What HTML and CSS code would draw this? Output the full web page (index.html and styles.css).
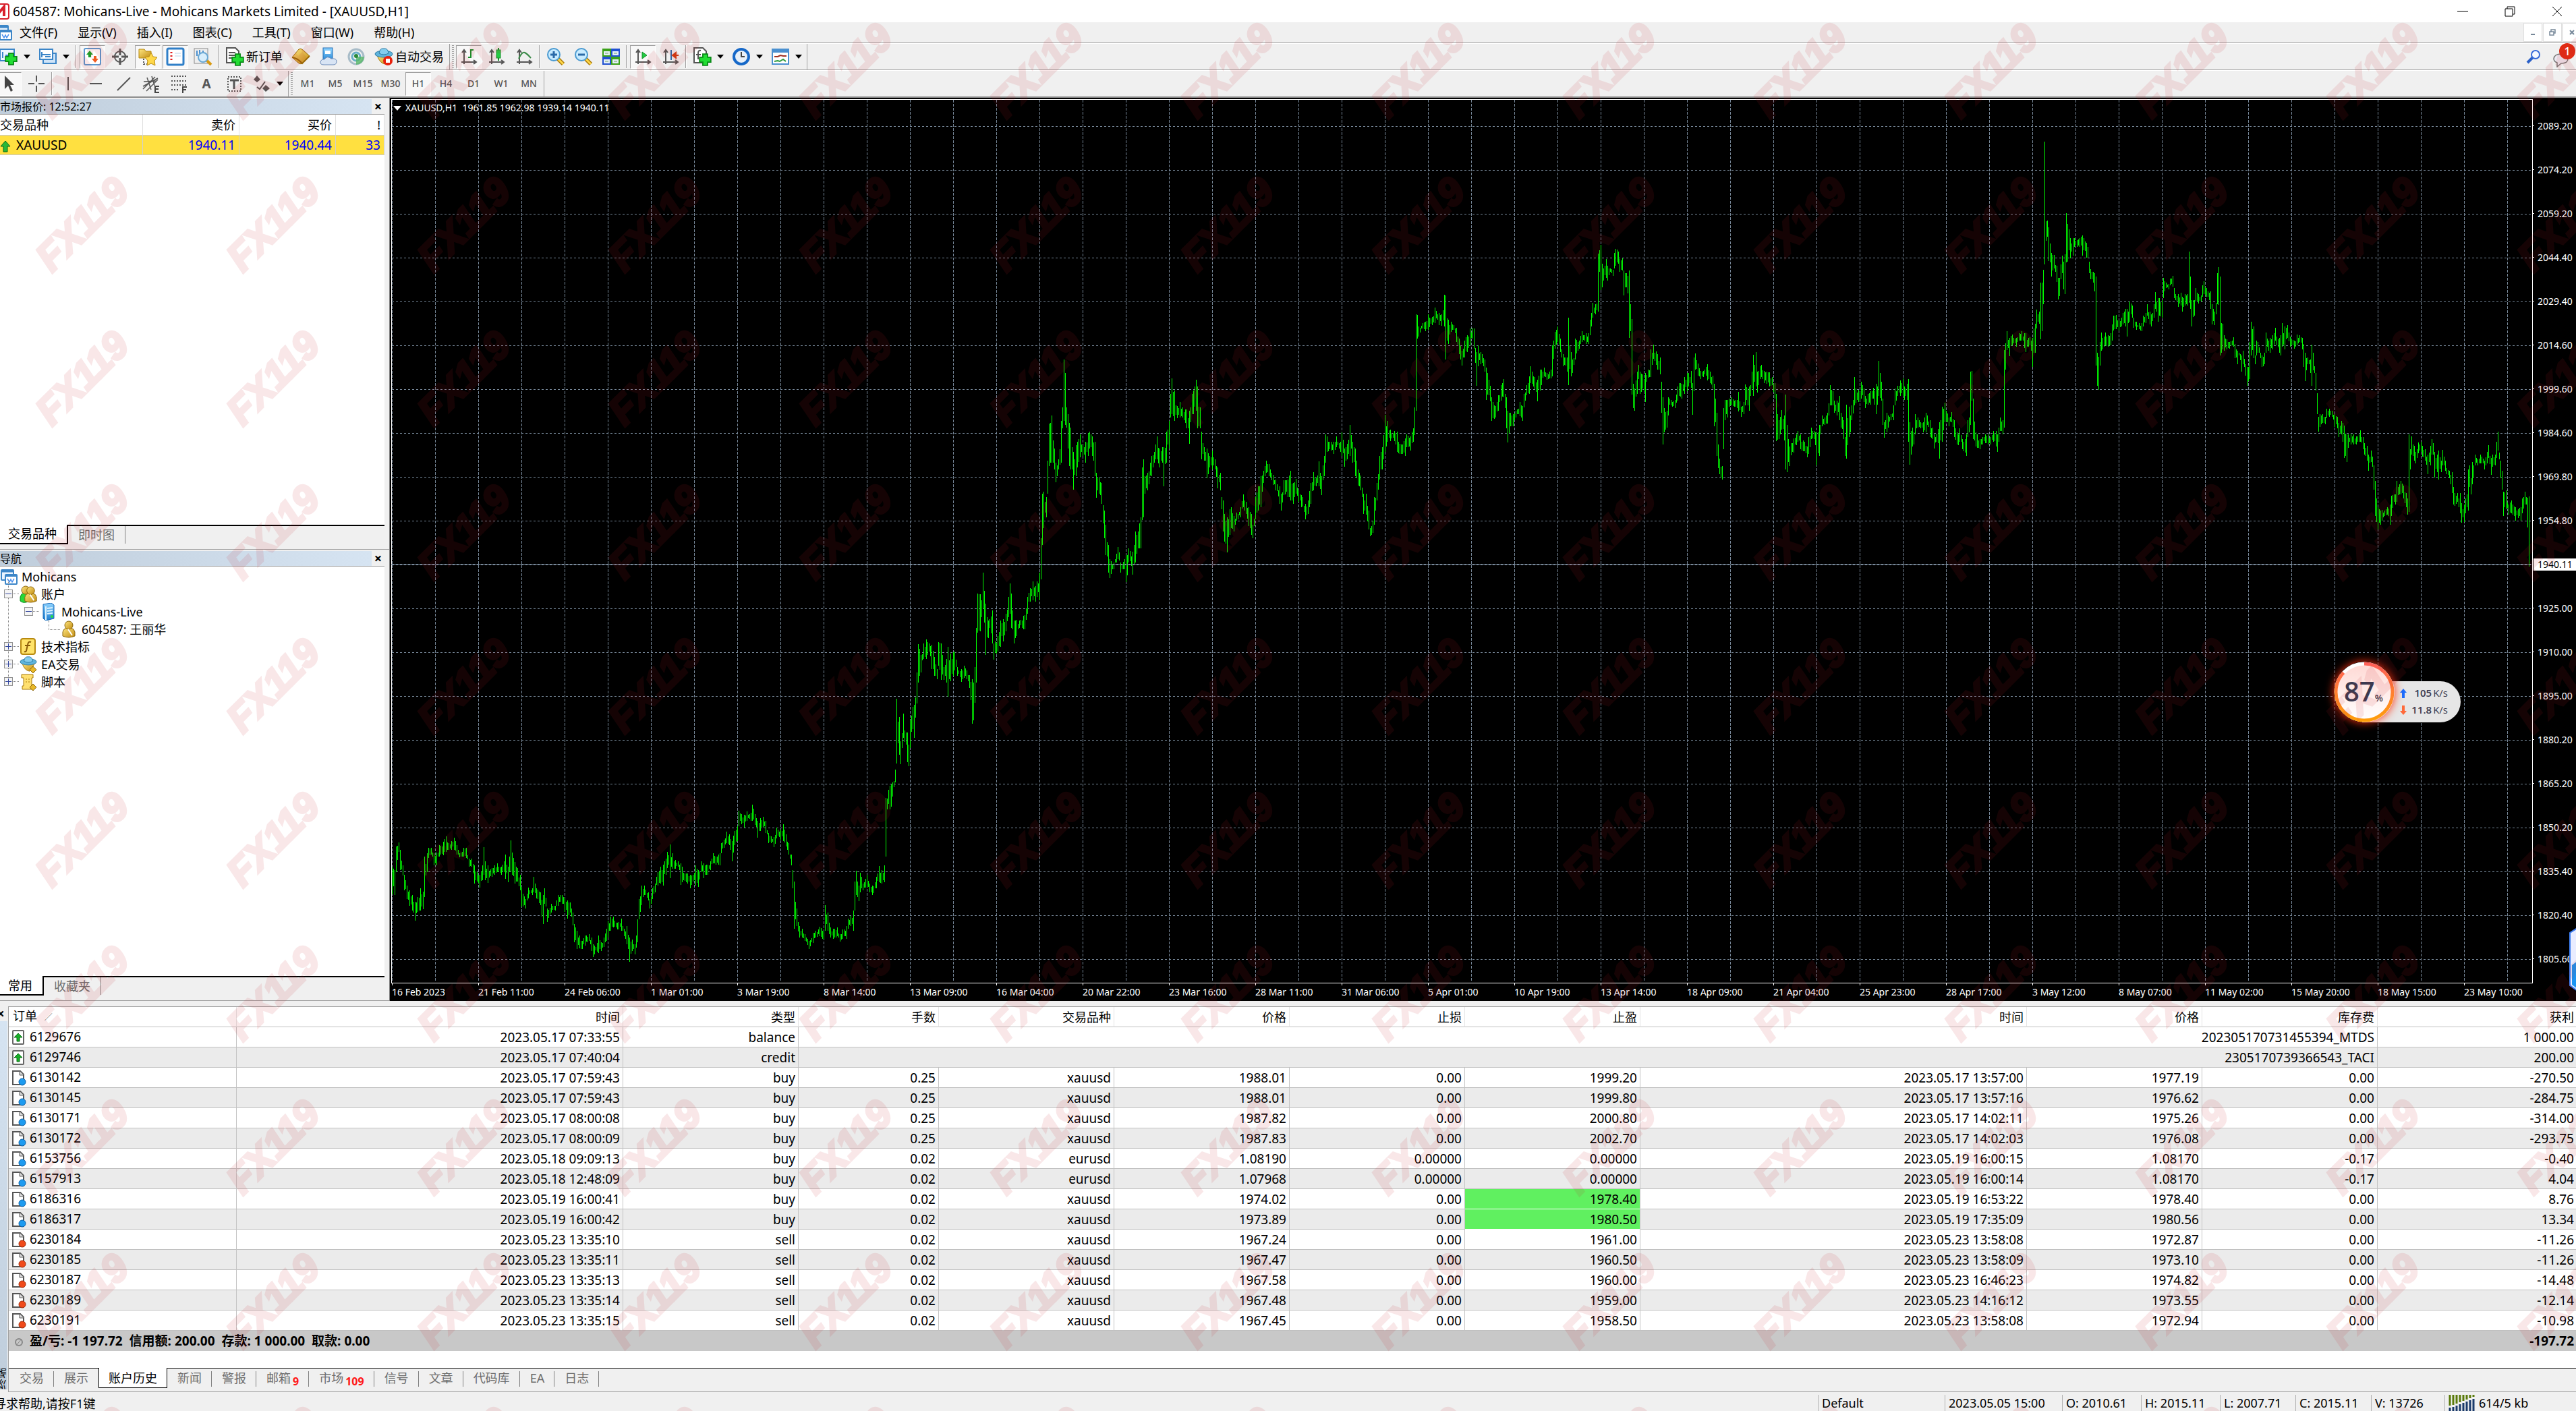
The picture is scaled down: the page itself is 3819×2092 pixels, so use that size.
FILE: index.html
```html
<!DOCTYPE html>
<html lang="zh-CN">
<head>
<meta charset="utf-8">
<title>604587: Mohicans-Live - Mohicans Markets Limited - [XAUUSD,H1]</title>
<link rel="stylesheet" href="styles.css">
</head>
<body>
<svg class="defs" aria-hidden="true">
  <defs>
    <linearGradient id="gold" x1="0" y1="0" x2="1" y2="1"><stop offset="0" stop-color="#ffe680"/><stop offset="1" stop-color="#c08a10"/></linearGradient>
    <linearGradient id="sky" x1="0" y1="0" x2="0" y2="1"><stop offset="0" stop-color="#8fd4ff"/><stop offset="1" stop-color="#1f7fd0"/></linearGradient>
    <linearGradient id="ring" x1="0" y1="0" x2="1" y2="0"><stop offset="0" stop-color="#ff9d0a"/><stop offset="1" stop-color="#ff6058"/></linearGradient>
    <linearGradient id="face" x1="0" y1="0" x2="0" y2="1"><stop offset="0" stop-color="#ffd9d4"/><stop offset="1" stop-color="#ffffff"/></linearGradient>
    <symbol id="doc" viewBox="0 0 22 24"><path d="M2 2h11l5 5v15H2z" fill="#fff" stroke="#555" stroke-width="2"/><path d="M12 2v6h6" fill="#ddd" stroke="#555"/></symbol>
    <symbol id="doc-buy" viewBox="0 0 22 24"><use href="#doc"/><circle cx="16" cy="18" r="5" fill="#1d9bf0" stroke="#0a5fa8"/></symbol>
    <symbol id="doc-sell" viewBox="0 0 22 24"><use href="#doc"/><circle cx="16" cy="18" r="5" fill="#f04a1a" stroke="#a02a08"/></symbol>
    <symbol id="doc-in" viewBox="0 0 22 24"><rect x="2" y="2" width="16" height="20" rx="1" fill="#fff" stroke="#666" stroke-width="2"/><path d="M10 6l6 6h-4v6H8v-6H4z" fill="#18b028" stroke="#0a6a14"/></symbol>
    <symbol id="plus" viewBox="0 0 16 16"><path d="M5 1h6v4h4v6h-4v4H5v-4H1V5h4z" fill="#22dd33" stroke="#0a8a18" stroke-width="1.5"/></symbol>
    <symbol id="windows" viewBox="0 0 26 26"><rect x="2" y="3" width="18" height="15" rx="1" fill="#eaf4ff" stroke="#3c86c8" stroke-width="2"/><path d="M2 5h18" stroke="#3c86c8" stroke-width="3"/><rect x="8" y="10" width="17" height="14" rx="1" fill="#fff" stroke="#3c86c8" stroke-width="2"/><path d="M8 12h17" stroke="#3c86c8" stroke-width="2"/><path d="M11 16l3 5 2-4 2 4 3-5" fill="none" stroke="#4a90ee" stroke-width="1.5"/></symbol>
    <symbol id="hat" viewBox="0 0 28 28"><path d="M4 12q4 12 12 13l8-12z" fill="url(#gold)" stroke="#a87808"/><ellipse cx="14" cy="10" rx="13" ry="5" fill="#5fb4dc" stroke="#2b7aa4"/><path d="M7 9q1-8 7-7 6-1 7 7-7 4-14 0z" fill="#84cdee" stroke="#2b7aa4"/></symbol>
    <symbol id="man" viewBox="0 0 26 26"><path d="M4 23V17q1-5 6-6h6q5 1 6 6v6q-9 4-18 0z" fill="url(#gold)" stroke="#8a6408"/><circle cx="13" cy="7" r="6" fill="url(#gold)" stroke="#8a6408"/><path d="M12 13l6 9" stroke="#fff" stroke-width="2"/></symbol>
    <symbol id="axes" viewBox="0 0 26 26"><path d="M6 3v20M2 20h21M3 6l3-4 3 4M20 17l4 3-4 3" fill="none" stroke="#555" stroke-width="2"/></symbol>
    <symbol id="lens" viewBox="0 0 28 28"><path d="M17 17l8 8" stroke="#a87808" stroke-width="6"/><path d="M17 17l8 8" stroke="#ffd84a" stroke-width="3"/><circle cx="11" cy="11" r="9" fill="#c8ebff" stroke="#4a9ad0" stroke-width="2"/></symbol>
    <pattern id="wm" width="283" height="228" patternUnits="userSpaceOnUse">
      <text class="wm-text" transform="translate(77 177) rotate(-45)">FX119</text>
    </pattern>
    <pattern id="hgrid" x="1" y="40" width="6" height="65" patternUnits="userSpaceOnUse"><path d="M0 .5h3" stroke="#778899"/></pattern>
    <pattern id="vgrid" x="65" y="1" width="64" height="6" patternUnits="userSpaceOnUse"><path d="M.5 0v4" stroke="#778899"/></pattern>
  </defs>
</svg>

<header class="titlebar">
  <svg class="app-logo" viewBox="0 0 22 24"><rect x="1" y="1" width="20" height="22" rx="3" fill="#fff" stroke="#d8202c" stroke-width="2"/><path d="M3 19V6l5 6 6-7v14" fill="none" stroke="#d8202c" stroke-width="4"/></svg>
  <h1>604587: Mohicans-Live - Mohicans Markets Limited - [XAUUSD,H1]</h1>
  <div class="window-buttons">
    <button aria-label="最小化"><svg viewBox="0 0 16 16"><path d="M0 8h16" stroke="#000"/></svg></button>
    <button aria-label="还原"><svg viewBox="0 0 16 16"><path d="M1 4h11v11H1zM4 4V1h11v11h-3" fill="none" stroke="#000"/></svg></button>
    <button aria-label="关闭"><svg viewBox="0 0 16 16"><path d="M1 1l14 14M15 1L1 15" stroke="#000"/></svg></button>
  </div>
</header>

<nav class="menubar">
  <svg class="menu-logo"><use href="#windows"/></svg>
  <button>文件(F)</button><button>显示(V)</button><button>插入(I)</button><button>图表(C)</button><button>工具(T)</button><button>窗口(W)</button><button>帮助(H)</button>
  <div class="mdi-buttons">
    <button aria-label="最小化图表"><svg viewBox="0 0 10 10"><path d="M2 8h6" stroke="#778899" stroke-width="2"/></svg></button>
    <button aria-label="还原图表"><svg viewBox="0 0 10 10"><path d="M1 4h6v5H1zM3 4V1h6v5H7" fill="none" stroke="#778899" stroke-width="1.5"/></svg></button>
    <button aria-label="关闭图表"><svg viewBox="0 0 10 10"><path d="M2 2l6 6M8 2L2 8" stroke="#778899" stroke-width="2"/></svg></button>
  </div>
</nav>

<div class="toolbar">
  <div class="group first">
    <button class="drop" aria-label="新图表"><svg class="ic" viewBox="0 0 28 28"><rect x="1" y="3" width="21" height="17" fill="#eef6ff" stroke="#3c86c8" stroke-width="2"/><path d="M5 7v9M9 12h6" stroke="#3c86c8" stroke-width="2"/><use href="#plus" x="8" y="8" width="19" height="19"/></svg><i></i></button>
    <button class="drop" aria-label="配置文件"><svg class="ic" viewBox="0 0 28 28"><rect x="7" y="9" width="19" height="15" fill="#cfe4f8" stroke="#3c86c8" stroke-width="2"/><rect x="2" y="3" width="19" height="15" fill="#fff" stroke="#3c86c8" stroke-width="2"/><path d="M5 7v8M5 11h13M10 14h8" stroke="#3c86c8" stroke-width="2"/></svg><i></i></button>
  </div>
  <div class="group">
    <span class="sep"></span>
    <button class="on" aria-label="市场报价"><svg class="ic" viewBox="0 0 28 28"><rect x="2" y="2" width="24" height="24" rx="2" fill="#fff" stroke="#5a98d0" stroke-width="2"/><path d="M10 5l5 6h-3v4H8v-4H5z" fill="#18a028"/><path d="M18 23l-5-6h3v-4h4v4h3z" fill="#f05a20"/></svg></button>
    <button aria-label="数据窗口"><svg class="ic" viewBox="0 0 28 28"><circle cx="14" cy="14" r="8" fill="none" stroke="#555" stroke-width="2"/><path d="M14 2v10M14 16v10M2 14h10M16 14h10" stroke="#555" stroke-width="3"/></svg></button>
    <button class="on" aria-label="导航"><svg class="ic" viewBox="0 0 28 28"><path d="M1 3h8l2 3h8v10H1z" fill="url(#gold)" stroke="#b88a10"/><path d="M8 17v9M8 25h5" stroke="#555" stroke-width="2" stroke-dasharray="2 2"/><path d="M19 8l3 6 6 1-4 5 1 7-6-3-6 3 1-7-4-5 6-1z" fill="#ffd84a" stroke="#b88a10"/></svg></button>
    <button class="on" aria-label="终端"><svg class="ic" viewBox="0 0 28 28"><rect x="2" y="2" width="24" height="24" rx="2" fill="#fff" stroke="#2f7fc8" stroke-width="3"/><path d="M8 7v14" stroke="#e02020" stroke-width="3" stroke-dasharray="2 3"/><path d="M13 9h9M13 13h9" stroke="#bcd4ea"/></svg></button>
    <button aria-label="策略测试"><svg class="ic" viewBox="0 0 28 28"><rect x="1" y="2" width="20" height="22" fill="#eee" stroke="#888"/><path d="M5 5v8M9 4v8M14 5v6" stroke="#4a90d0" stroke-width="2"/><path d="M19 19l7 7" stroke="#d89a10" stroke-width="4"/><circle cx="14" cy="15" r="7" fill="#d8eefc" stroke="#6aa8d4" stroke-width="2"/></svg></button>
    <span class="sep"></span>
    <button class="label"><svg class="ic" viewBox="0 0 28 28"><path d="M2 1h13l5 5v17H2z" fill="#fff" stroke="#555" stroke-width="2"/><path d="M5 8h10M5 12h10M5 16h6" stroke="#555" stroke-width="2"/><use href="#plus" x="9" y="9" width="19" height="19"/></svg>新订单</button>
    <button aria-label="MetaEditor"><svg class="ic" viewBox="0 0 28 28"><path d="M1 15L11 3q3-2 6 1l10 9-11 11q-3 2-6-1z" fill="url(#gold)" stroke="#9a6808"/><path d="M1 15q8 1 15 9l11-11" fill="none" stroke="#9a6808" stroke-width="2"/></svg></button>
    <button aria-label="云端"><svg class="ic" viewBox="0 0 28 28"><rect x="6" y="1" width="14" height="20" fill="url(#sky)" stroke="#1f6fb8"/><path d="M9 5h8v5H9z" fill="#fff"/><path d="M7 26q-6 0-5-5 2-4 6-3 4-6 10-1 8-1 8 4 0 5-5 5z" fill="#d8e4f4" stroke="#6a8ab8"/></svg></button>
    <button aria-label="信号"><svg class="ic" viewBox="0 0 28 28"><circle cx="14" cy="14" r="11" fill="none" stroke="#a8bcc8" stroke-width="3"/><circle cx="14" cy="14" r="6" fill="none" stroke="#6ab0c8" stroke-width="3"/><path d="M14 14v12q11-1 12-12z" fill="#58b868" opacity=".8"/><circle cx="14" cy="13" r="3" fill="#2a8a3a"/></svg></button>
    <button class="label"><svg class="ic" viewBox="0 0 28 28"><use href="#hat" width="28" height="28"/><circle cx="20" cy="20" r="7" fill="#e8200c"/><rect x="17" y="17" width="6" height="6" fill="#fff"/></svg>自动交易</button>
    <span class="end"></span><span class="grip"></span>
    <button class="on" aria-label="柱状图"><svg class="ic" viewBox="0 0 28 28"><use href="#axes" x="1" y="2" width="26" height="26"/><path d="M17 3v13M17 4h4M13 15h4" stroke="#18902a" stroke-width="2"/></svg></button>
    <button aria-label="蜡烛图"><svg class="ic" viewBox="0 0 28 28"><use href="#axes" x="1" y="2" width="26" height="26"/><path d="M17 1v19" stroke="#18902a" stroke-width="2"/><rect x="14" y="4" width="6" height="12" fill="#22cc44" stroke="#18902a"/></svg></button>
    <button aria-label="折线图"><svg class="ic" viewBox="0 0 28 28"><use href="#axes" x="1" y="2" width="26" height="26"/><path d="M6 17q5-11 9-9t9 8" fill="none" stroke="#3a8a48" stroke-width="2"/></svg></button>
    <span class="sep"></span>
    <button aria-label="放大"><svg class="ic" viewBox="0 0 28 28"><use href="#lens" width="28" height="28"/><path d="M6 11h10M11 6v10" stroke="#2a6aa8" stroke-width="3"/></svg></button>
    <button aria-label="缩小"><svg class="ic" viewBox="0 0 28 28"><use href="#lens" width="28" height="28"/><path d="M6 11h10" stroke="#2a6aa8" stroke-width="3"/></svg></button>
    <button aria-label="平铺"><svg class="ic" viewBox="0 0 28 28"><path d="M1 2h13v12H1zM14 14h13v12H14z" fill="#3aa018"/><path d="M14 2h13v12H14zM1 14h13v12H1z" fill="#2050d0"/><path d="M3 6h9v6H3zM16 6h9v6h-9zM3 18h9v6H3zM16 18h9v6h-9z" fill="#e4eef8"/><path d="M5 9h5M18 9h5M5 21h5M18 21h5" stroke="#6aa060"/></svg></button>
    <span class="sep"></span>
    <button class="on" aria-label="自动滚动"><svg class="ic" viewBox="0 0 28 28"><use href="#axes" x="1" y="2" width="26" height="26"/><path d="M13 7l7 5-7 5z" fill="#22cc44" stroke="#18902a"/></svg></button>
    <button aria-label="图表平移"><svg class="ic" viewBox="0 0 28 28"><use href="#axes" x="1" y="2" width="26" height="26"/><path d="M15 4v15" stroke="#2a6aa8" stroke-width="2"/><path d="M26 12h-6M22 8l-5 4 5 4z" stroke="#d03a10" stroke-width="2" fill="#d03a10"/></svg></button>
    <span class="sep"></span>
    <button class="drop" aria-label="指标"><svg class="ic" viewBox="0 0 28 28"><path d="M2 1h13l5 5v17H2z" fill="#fff" stroke="#555" stroke-width="2"/><path d="M12 5q-4-1-4 4v9M5 11h7" stroke="#555" stroke-width="2" fill="none"/><use href="#plus" x="9" y="9" width="19" height="19"/></svg><i></i></button>
    <button class="drop" aria-label="周期"><svg class="ic" viewBox="0 0 28 28"><circle cx="14" cy="14" r="11" fill="#e8f0f8" stroke="#1668c8" stroke-width="4"/><path d="M14 7v7h5" fill="none" stroke="#444" stroke-width="2"/></svg><i></i></button>
    <button class="drop" aria-label="模板"><svg class="ic" viewBox="0 0 28 28"><rect x="2" y="3" width="24" height="22" fill="#fff" stroke="#4a90d0" stroke-width="2"/><path d="M2 6h24" stroke="#4a90d0" stroke-width="4"/><path d="M5 14h5l4-2 4 1h5" fill="none" stroke="#a03020" stroke-width="2"/><path d="M5 21l5-1 3 1 5-3 4 3" fill="none" stroke="#2a9a3a" stroke-width="2"/></svg><i></i></button>
    <span class="end"></span>
  </div>
  <div class="toolbar-right">
    <button aria-label="搜索"><svg viewBox="0 0 22 22"><path d="M2 20l8-8" stroke="#2a60c8" stroke-width="4"/><circle cx="14" cy="8" r="6" fill="#f4f8ff" stroke="#3468d8" stroke-width="2"/></svg></button>
    <button class="chat" aria-label="消息"><svg viewBox="0 0 26 22"><path d="M12 2q10 0 10 7t-10 7l-6 5v-6q-5-2-5-6 1-7 11-7z" fill="#eceaf2" stroke="#777" stroke-width="1.5"/></svg><b>1</b></button>
  </div>
</div>

<div class="toolbar lines">
  <div class="group tools">
    <button class="on" aria-label="光标"><svg class="ic" viewBox="0 0 28 28"><path d="M8 2v20l5-5 4 9 3-2-4-8h6z" fill="#444"/></svg></button>
    <button aria-label="十字线"><svg class="ic" viewBox="0 0 28 28"><path d="M14 2v9M14 17v9M2 14h9M17 14h9" stroke="#555" stroke-width="2"/></svg></button>
    <span class="sep"></span>
    <button aria-label="垂直线"><svg class="ic" viewBox="0 0 28 28"><path d="M14 4v20" stroke="#555" stroke-width="2"/></svg></button>
    <button aria-label="水平线"><svg class="ic" viewBox="0 0 28 28"><path d="M5 14h18" stroke="#555" stroke-width="2"/></svg></button>
    <button aria-label="趋势线"><svg class="ic" viewBox="0 0 28 28"><path d="M5 24L24 5" stroke="#555" stroke-width="2"/></svg></button>
    <button aria-label="通道"><svg class="ic" viewBox="0 0 28 28"><path d="M2 22L20 4M7 25L24 8M2 18l22-12M3 11l20-1M8 5l6 18M15 3l4 14" stroke="#555" stroke-width="1.5"/><path d="M26 18h-6v9h6M20 22h5" fill="none" stroke="#444" stroke-width="2"/></svg></button>
    <button aria-label="斐波纳契"><svg class="ic" viewBox="0 0 28 28"><path d="M3 3h22M3 10h22M3 16h22M3 23h12" stroke="#555" stroke-width="2" stroke-dasharray="2 2"/><path d="M26 19h-6v9M20 23h5" fill="none" stroke="#444" stroke-width="2"/></svg></button>
    <button class="letter">A</button>
    <button aria-label="文本标签"><svg class="ic" viewBox="0 0 28 28"><rect x="5" y="4" width="19" height="21" fill="none" stroke="#555" stroke-width="2" stroke-dasharray="2 2"/><path d="M8 9h13M14 9v13" stroke="#555" stroke-width="3"/></svg></button>
    <button class="drop" aria-label="箭头"><svg class="ic" viewBox="0 0 28 28"><path d="M7 2l5 6-5 4-5-4zM20 16l6 5-6 5-5-5z" fill="#555"/><path d="M7 19l4 3 8-11" fill="none" stroke="#555" stroke-width="2"/></svg><i></i></button>
    <span class="end"></span><span class="grip"></span>
    <button>M1</button><button>M5</button><button>M15</button><button>M30</button><button class="on">H1</button><button>H4</button><button>D1</button><button>W1</button><button>MN</button>
    <span class="end"></span>
  </div>
</div>

<main class="workspace">
  <aside class="side">
    <section class="panel">
      <div class="panel-title"><h2>市场报价: 12:52:27</h2><button aria-label="关闭市场报价">×</button></div>
      <div class="quotes-list">
      <table class="quotes">
        <colgroup><col class="q-name"><col class="q-bid"><col class="q-bid"><col class="q-spread"></colgroup>
        <thead><tr><th>交易品种</th><th>卖价</th><th>买价</th><th>!</th></tr></thead>
        <tbody><tr><td><svg viewBox="0 0 16 18"><path d="M8 1l7 8h-4v8H5V9H1z" fill="#28b838" stroke="#0a6a14"/></svg>XAUUSD</td><td>1940.11</td><td>1940.44</td><td>33</td></tr></tbody>
      </table>
      </div>
      <div class="panel-tabs"><button class="active">交易品种</button><button>即时图</button></div>
    </section>
    <section class="panel">
      <div class="panel-title"><h2>导航</h2><button aria-label="关闭导航">×</button></div>
      <ul class="tree">
        <li><svg class="node"><use href="#windows"/></svg>Mohicans</li>
        <li class="l1"><span class="box minus"></span><svg class="node" viewBox="0 0 26 26"><path d="M1 23v-6q1-5 6-6h6v13q-8 3-12-1z" fill="#28d838" stroke="#0a8a18"/><circle cx="9" cy="7" r="6" fill="url(#gold)" stroke="#8a6408"/><use href="#man" x="4" y="1" width="25" height="25"/></svg>账户</li>
        <li class="l2"><span class="box minus"></span><svg class="node" viewBox="0 0 26 26"><path d="M5 2l12-2 4 3v20l-12 3-4-3z" fill="url(#sky)" stroke="#1668b8"/><path d="M9 5v20M11 8l8-1M11 12l8-1M11 16l8-1" stroke="#e0f4ff" stroke-width="2"/><circle cx="18" cy="20" r="2" fill="#28e040"/></svg>Mohicans-Live</li>
        <li class="l3"><svg class="node"><use href="#man"/></svg>604587: 王丽华</li>
        <li class="l1"><span class="box plus"></span><svg class="node" viewBox="0 0 26 26"><rect x="2" y="1" width="21" height="23" rx="3" fill="#ffe36a" stroke="#b88a10" stroke-width="2"/><path d="M17 6q-4-2-5 4l-2 9q-1 2-3 1M8 11h8" fill="none" stroke="#8a5a08" stroke-width="2"/></svg>技术指标</li>
        <li class="l1"><span class="box plus"></span><svg class="node" viewBox="0 0 26 26"><use href="#hat" width="26" height="26"/><path d="M20 16l5 5-5 5-5-5z" fill="#e8b828" stroke="#8a6408"/></svg>EA交易</li>
        <li class="l1"><span class="box plus"></span><svg class="node" viewBox="0 0 26 26"><path d="M3 2h17v5h-2v12h4q-2 6-6 5H4v-5h2V7H3z" fill="#ffe070" stroke="#a87808"/><path d="M9 9h7M9 13h6" stroke="#a87808" stroke-dasharray="2 2"/><path d="M20 16l5 5-5 5-5-5z" fill="#e8b828" stroke="#8a6408"/></svg>脚本</li>
      </ul>
      <div class="panel-tabs"><button class="active">常用</button><button>收藏夹</button></div>
    </section>
  </aside>

  <section class="chart">
    <div class="plot">
      <svg class="canvas" width="100%" height="100%">
        <rect width="100%" height="100%" fill="url(#hgrid)"/>
        <rect width="100%" height="100%" fill="url(#vgrid)"/>
        <path id="bars" fill="none" stroke="#00ff00"/>
        <path d="M0 689.5h3175" stroke="#778899"/>
      </svg>
      <p class="chart-title"><i></i>XAUUSD,H1 &nbsp;1961.85 1962.98 1939.14 1940.11</p>
    </div>
    <ol class="prices">
      <li>2089.20</li><li>2074.20</li><li>2059.20</li><li>2044.40</li><li>2029.40</li><li>2014.60</li><li>1999.60</li><li>1984.60</li><li>1969.80</li><li>1954.80</li><li class="current"><span>1940.11</span></li><li>1925.00</li><li>1910.00</li><li>1895.00</li><li>1880.20</li><li>1865.20</li><li>1850.20</li><li>1835.40</li><li>1820.40</li><li>1805.60</li>
    </ol>
    <ol class="times">
      <li>16 Feb 2023</li><li>21 Feb 11:00</li><li>24 Feb 06:00</li><li>1 Mar 01:00</li><li>3 Mar 19:00</li><li>8 Mar 14:00</li><li>13 Mar 09:00</li><li>16 Mar 04:00</li><li>20 Mar 22:00</li><li>23 Mar 16:00</li><li>28 Mar 11:00</li><li>31 Mar 06:00</li><li>5 Apr 01:00</li><li>10 Apr 19:00</li><li>13 Apr 14:00</li><li>18 Apr 09:00</li><li>21 Apr 04:00</li><li>25 Apr 23:00</li><li>28 Apr 17:00</li><li>3 May 12:00</li><li>8 May 07:00</li><li>11 May 02:00</li><li>15 May 20:00</li><li>18 May 15:00</li><li>23 May 10:00</li>
    </ol>
  </section>
</main>

<section class="terminal">
  <div class="strip"><button aria-label="关闭终端">×</button><span>终端</span></div>
  <div class="terminal-body">
    <table class="history">
      <colgroup><col class="c-order"><col class="c-time"><col><col class="c-lots"><col><col><col><col><col class="c-time"><col><col><col class="c-profit"></colgroup>
      <thead><tr><th>订单 <span class="sort">∕</span></th><th>时间</th><th>类型</th><th>手数</th><th>交易品种</th><th>价格</th><th>止损</th><th>止盈</th><th>时间</th><th>价格</th><th>库存费</th><th>获利</th></tr></thead>
      <tbody>
        <tr><td><svg><use href="#doc-in"/></svg>6129676</td><td>2023.05.17 07:33:55</td><td>balance</td><td colspan="8">202305170731455394_MTDS</td><td>1 000.00</td></tr>
        <tr><td><svg><use href="#doc-in"/></svg>6129746</td><td>2023.05.17 07:40:04</td><td>credit</td><td colspan="8">2305170739366543_TACI</td><td>200.00</td></tr>
        <tr><td><svg><use href="#doc-buy"/></svg>6130142</td><td>2023.05.17 07:59:43</td><td>buy</td><td>0.25</td><td>xauusd</td><td>1988.01</td><td>0.00</td><td>1999.20</td><td>2023.05.17 13:57:00</td><td>1977.19</td><td>0.00</td><td>-270.50</td></tr>
        <tr><td><svg><use href="#doc-buy"/></svg>6130145</td><td>2023.05.17 07:59:43</td><td>buy</td><td>0.25</td><td>xauusd</td><td>1988.01</td><td>0.00</td><td>1999.80</td><td>2023.05.17 13:57:16</td><td>1976.62</td><td>0.00</td><td>-284.75</td></tr>
        <tr><td><svg><use href="#doc-buy"/></svg>6130171</td><td>2023.05.17 08:00:08</td><td>buy</td><td>0.25</td><td>xauusd</td><td>1987.82</td><td>0.00</td><td>2000.80</td><td>2023.05.17 14:02:11</td><td>1975.26</td><td>0.00</td><td>-314.00</td></tr>
        <tr><td><svg><use href="#doc-buy"/></svg>6130172</td><td>2023.05.17 08:00:09</td><td>buy</td><td>0.25</td><td>xauusd</td><td>1987.83</td><td>0.00</td><td>2002.70</td><td>2023.05.17 14:02:03</td><td>1976.08</td><td>0.00</td><td>-293.75</td></tr>
        <tr><td><svg><use href="#doc-buy"/></svg>6153756</td><td>2023.05.18 09:09:13</td><td>buy</td><td>0.02</td><td>eurusd</td><td>1.08190</td><td>0.00000</td><td>0.00000</td><td>2023.05.19 16:00:15</td><td>1.08170</td><td>-0.17</td><td>-0.40</td></tr>
        <tr><td><svg><use href="#doc-buy"/></svg>6157913</td><td>2023.05.18 12:48:09</td><td>buy</td><td>0.02</td><td>eurusd</td><td>1.07968</td><td>0.00000</td><td>0.00000</td><td>2023.05.19 16:00:14</td><td>1.08170</td><td>-0.17</td><td>4.04</td></tr>
        <tr><td><svg><use href="#doc-buy"/></svg>6186316</td><td>2023.05.19 16:00:41</td><td>buy</td><td>0.02</td><td>xauusd</td><td>1974.02</td><td>0.00</td><td class="hit">1978.40</td><td>2023.05.19 16:53:22</td><td>1978.40</td><td>0.00</td><td>8.76</td></tr>
        <tr><td><svg><use href="#doc-buy"/></svg>6186317</td><td>2023.05.19 16:00:42</td><td>buy</td><td>0.02</td><td>xauusd</td><td>1973.89</td><td>0.00</td><td class="hit">1980.50</td><td>2023.05.19 17:35:09</td><td>1980.56</td><td>0.00</td><td>13.34</td></tr>
        <tr><td><svg><use href="#doc-sell"/></svg>6230184</td><td>2023.05.23 13:35:10</td><td>sell</td><td>0.02</td><td>xauusd</td><td>1967.24</td><td>0.00</td><td>1961.00</td><td>2023.05.23 13:58:08</td><td>1972.87</td><td>0.00</td><td>-11.26</td></tr>
        <tr><td><svg><use href="#doc-sell"/></svg>6230185</td><td>2023.05.23 13:35:11</td><td>sell</td><td>0.02</td><td>xauusd</td><td>1967.47</td><td>0.00</td><td>1960.50</td><td>2023.05.23 13:58:09</td><td>1973.10</td><td>0.00</td><td>-11.26</td></tr>
        <tr><td><svg><use href="#doc-sell"/></svg>6230187</td><td>2023.05.23 13:35:13</td><td>sell</td><td>0.02</td><td>xauusd</td><td>1967.58</td><td>0.00</td><td>1960.00</td><td>2023.05.23 16:46:23</td><td>1974.82</td><td>0.00</td><td>-14.48</td></tr>
        <tr><td><svg><use href="#doc-sell"/></svg>6230189</td><td>2023.05.23 13:35:14</td><td>sell</td><td>0.02</td><td>xauusd</td><td>1967.48</td><td>0.00</td><td>1959.00</td><td>2023.05.23 14:16:12</td><td>1973.55</td><td>0.00</td><td>-12.14</td></tr>
        <tr><td><svg><use href="#doc-sell"/></svg>6230191</td><td>2023.05.23 13:35:15</td><td>sell</td><td>0.02</td><td>xauusd</td><td>1967.45</td><td>0.00</td><td>1958.50</td><td>2023.05.23 13:58:08</td><td>1972.94</td><td>0.00</td><td>-10.98</td></tr>
      </tbody>
      <tfoot><tr><td colspan="11"><svg viewBox="0 0 22 24"><circle cx="11" cy="13" r="5" fill="none" stroke="#888" stroke-width="2"/><path d="M7 18l8-10" stroke="#888"/></svg>盈/亏: -1 197.72 &nbsp;信用额: 200.00 &nbsp;存款: 1 000.00 &nbsp;取款: 0.00</td><td>-197.72</td></tr></tfoot>
    </table>
    <div class="terminal-tabs">
      <button>交易</button><button class="before">展示</button><button class="active">账户历史</button><button>新闻</button><button>警报</button><button>邮箱<b>9</b></button><button>市场<b>109</b></button><button>信号</button><button>文章</button><button>代码库</button><button>EA</button><button>日志</button>
    </div>
  </div>
</section>

<footer class="status">
  <p>寻求帮助,请按F1键</p>
  <span class="s-profile">Default</span><span class="s-date">2023.05.05 15:00</span><span class="s-ohl">O: 2010.61</span><span class="s-ohl">H: 2015.11</span><span class="s-low">L: 2007.71</span><span class="s-low">C: 2015.11</span><span class="s-vol">V: 13726</span>
  <span class="s-net"><svg viewBox="0 0 40 24"><path d="M2 0v16M7 0v15M12 0v13M17 0v11M22 0v9M27 0v7M32 0v5M37 0v3" stroke="#5a7a0a" stroke-width="3"/><path d="M2 24v-5M7 24v-6M12 24v-8M17 24V14M22 24V12M27 24V10M32 24V8M37 24V6" stroke="#1a3a6a" stroke-width="3"/></svg>614/5 kb</span>
</footer>

<aside class="speed">
  <div class="rates">
    <p><svg viewBox="0 0 10 14"><path d="M5 0l5 6H7v8H3V6H0z" fill="#1a6dff"/></svg><b>105</b>K/s</p>
    <p><svg viewBox="0 0 10 14"><path d="M5 14l5-6H7V0H3v8H0z" fill="#ff6a3a"/></svg><b>11.8</b>K/s</p>
  </div>
  <div class="gauge">
    <svg viewBox="0 0 90 90"><circle cx="45" cy="45" r="42" fill="url(#face)" stroke="#fff" stroke-width="5"/><circle cx="45" cy="45" r="42" fill="none" stroke="url(#ring)" stroke-width="5" pathLength="100" stroke-dasharray="87 13" transform="rotate(-90 45 45)"/></svg>
    <strong>87<small>%</small></strong>
  </div>
</aside>
<svg class="assistant" viewBox="0 0 10 94"><path d="M12 1L1 8v78l11 8" fill="#e8ecff" stroke="#3a7cf0" stroke-width="2"/><path d="M12 50l-8 6v29l8 6" fill="#1a94f2"/></svg>
<svg class="watermark" aria-hidden="true"><rect width="100%" height="100%" fill="url(#wm)"/></svg>
<script src="chart.js"></script>
</body>
</html>
```

FILE: styles.css
```css
* { box-sizing: border-box; }
body {
  margin: 0;
  height: 100vh;
  display: flex;
  flex-direction: column;
  position: relative;
  overflow: hidden;
  background: #f0f0f0;
  color: #000;
  font: 18px/24px "Noto Sans", "Noto Sans CJK SC", sans-serif;
}
h1, h2, p, ul, ol { margin: 0; padding: 0; font-weight: normal; list-style: none; }
button { font: inherit; color: inherit; background: none; border: 0; padding: 0; margin: 0; }
svg { display: block; flex: none; }
table { border-collapse: separate; border-spacing: 0; table-layout: fixed; width: 100%; }
th, td { font-weight: normal; padding: 0; white-space: nowrap; }
.defs { position: absolute; width: 0; height: 0; }

.titlebar { height: 33px; flex: none; display: flex; align-items: center; background: #fff; }
.app-logo { width: 22px; height: 24px; margin-left: -8px; }
.titlebar h1 { font-size: 19px; margin-left: 5px; }
.window-buttons { margin-left: auto; display: flex; gap: 54px; padding-right: 20px; }
.window-buttons svg { width: 16px; height: 16px; }

.menubar { height: 31px; flex: none; display: flex; align-items: center; border-bottom: 1px solid #a0a0a0; }
.menu-logo { width: 26px; height: 26px; margin: 0 -4px 0 -8px; }
.menubar > button { padding: 0 15px; }
.mdi-buttons { margin: 0 -8px 0 auto; display: flex; gap: 1px; }
.mdi-buttons button { width: 28px; height: 28px; background: #fff; border: 1px solid #e0e0e0; display: grid; place-items: center; }
.mdi-buttons svg { width: 10px; height: 10px; }

.toolbar { height: 40px; flex: none; display: flex; align-items: center; border-top: 1px solid #fff; border-bottom: 1px solid #a0a0a0; }
.toolbar.lines { height: 41px; border-bottom: 2px solid #8c8c8c; font-size: 14px; font-weight: 500; color: #555; }
.group { display: flex; align-items: center; gap: 3px; }
.group.first { margin-left: -6px; padding-right: 5px; }
.group.tools { margin-left: -6px; }
.group button { width: 38px; height: 35px; display: flex; align-items: center; justify-content: center; }
.group .on { background: #f8f8f8; border: 1px solid #fff; border-top-color: #a0a0a0; border-left-color: #a0a0a0; }
.group .drop { width: 55px; gap: 8px; }
.group .drop i { border: 5px solid transparent; border-top: 6px solid #000; border-bottom: 0; }
.group .label { width: auto; padding: 0 5px; gap: 3px; }
.group .letter { font-size: 19px; font-weight: bold; }
.ic { width: 28px; height: 28px; }
.sep { width: 2px; height: 34px; margin-right: 1px; background: #a0a0a0; border-right: 1px solid #fff; }
.end { width: 1px; height: 38px; background: #a0a0a0; }
.grip { width: 3px; height: 34px; background: repeating-linear-gradient(#a0a0a0 0 1px, #f0f0f0 1px 3px); }
.toolbar-right { margin-left: auto; display: flex; align-items: center; gap: 18px; }
.toolbar-right svg { width: 22px; height: 22px; }
.toolbar-right .chat { position: relative; width: 34px; }
.chat svg { width: 26px; margin-top: 10px; }
.chat b { position: absolute; left: 9px; top: -4px; width: 24px; height: 24px; border-radius: 50%; background: #e02c14; color: #fff; font-size: 17px; font-weight: 500; line-height: 24px; text-align: center; }

.workspace { flex: 1; min-height: 0; display: flex; }
.side { width: 577px; flex: none; display: flex; flex-direction: column; }
.panel { flex: 1 1 0; min-height: 0; display: flex; flex-direction: column; padding: 2px 7px 5px 0; border-bottom: 1px solid #a0a0a0; }
.panel-title { display: flex; height: 23px; flex: none; border-bottom: 1px solid #a0a0a0; }
.panel-title h2 { flex: 1; font-size: 16px; line-height: 22px; background: linear-gradient(90deg, #bfcddb, #d6e4f2); }
.panel-title button { width: 19px; font-size: 20px; line-height: 20px; font-weight: bold; }
.quotes-list { flex: 1; background: #fff; }
.quotes th { height: 31px; text-align: right; padding-right: 5px; border-right: 1px solid #e0e0e0; border-bottom: 1px solid #c8c8c8; }
.quotes th:first-child, .quotes td:first-child { text-align: left; }
.quotes td { height: 29px; text-align: right; padding-right: 5px; background: #ffe040; color: #0000ff; border-right: 1px solid #d0d0d0; border-bottom: 1px solid #c8c8c8; font-size: 19px; }
.quotes td:first-child { color: #000; }
.quotes td svg { display: inline-block; width: 16px; height: 18px; margin-right: 8px; vertical-align: -4px; }
.q-name { width: 212px; }
.q-bid { width: 143px; }
.q-spread { width: 72px; }
.panel-tabs { height: 31px; flex: none; display: flex; border-top: 2px solid #000; }
.panel-tabs button { height: 26px; padding: 0 15px; color: #6d6d6d; line-height: 24px; border-right: 1px solid #808080; }
.panel-tabs .active { height: 29px; margin-top: -2px; padding-left: 12px; background: #fff; color: #000; border-right: 2px solid #000; border-bottom: 2px solid #000; }
.tree { flex: 1; background: #fff; padding-top: 2px; line-height: 26px; }
.tree li { height: 26px; display: flex; align-items: center; gap: 6px; }
.node { width: 26px; height: 26px; }
.tree .l1 { padding-left: 6px; }
.tree .l2 { padding-left: 36px; }
.tree .l3 { padding-left: 89px; }
.box { width: 13px; height: 13px; border: 1px solid #909090; margin-right: 4px; background: linear-gradient(#30449c, #30449c) center / 9px 1px no-repeat, #f4f4f4; position: relative; }
.box.plus { background: linear-gradient(#30449c, #30449c) center / 9px 1px no-repeat, linear-gradient(#30449c, #30449c) center / 1px 9px no-repeat, #f4f4f4; }
.box::after { content: ""; position: absolute; left: 12px; top: 5px; width: 9px; border-top: 1px dotted #808080; }
.l1 .box::before { content: ""; position: absolute; left: 5px; bottom: 12px; height: 13px; border-left: 1px dotted #808080; }
.l3 + .l1 .box::before { height: 65px; }
.l3 { position: relative; }
.l3::before { content: ""; position: absolute; left: 72px; top: 0; width: 16px; height: 13px; border-left: 1px dotted #808080; border-bottom: 1px dotted #808080; }

.chart { flex: 1; min-width: 0; background: #000; color: #fff; border-left: 1px solid #808080; padding: 2px 0 0 2px; display: grid; grid-template-columns: minmax(0, 1fr) 64px; grid-template-rows: minmax(0, 1fr) 26px; font-size: 14px; line-height: 18px; }
.plot { position: relative; border: 1px solid #fff; }
.canvas { position: absolute; left: -1px; top: -1px; right: 0; bottom: 0; }
.chart-title { position: relative; display: flex; align-items: center; gap: 6px; padding: 3px 2px; }
.chart-title i { border: 6px solid transparent; border-top: 7px solid #fff; border-bottom: 0; }
.prices { padding-top: 7px; }
.prices li { height: 65px; display: flex; align-items: center; gap: 5px; }
.prices li::before { content: ""; width: 2px; height: 1px; background: #fff; }
.prices .current { padding-left: 1px; gap: 0; }
.prices .current::before { display: none; }
.current span { flex: 1; padding-left: 6px; background: #fff; color: #000; }
.times { grid-column: 1 / -1; display: flex; overflow: hidden; padding-left: 1px; }
.times li { width: 128px; flex: none; white-space: nowrap; line-height: 20px; }
.times li::before { content: ""; display: block; width: 1px; height: 3px; background: #fff; }

.terminal { flex: none; display: flex; padding-top: 8px; }
.strip { width: 12px; flex: none; display: flex; flex-direction: column; overflow: hidden; }
.strip button { height: 22px; margin-left: -10px; width: 22px; font-size: 20px; line-height: 14px; font-weight: bold; }
.strip span { flex: 1; width: 20px; margin: 0 0 4px -9px; background: linear-gradient(#bfcddb, #d6e4f2); font-size: 16px; line-height: 20px; writing-mode: vertical-rl; text-orientation: sideways; transform: rotate(180deg); }
.terminal-body { flex: 1; min-width: 0; background: #fff; border-left: 1px solid #a0a0a0; border-top: 1px solid #a0a0a0; }
.history col { width: 260px; }
.history .c-order { width: 338px; }
.history .c-time { width: 573px; }
.history .c-lots { width: 208px; }
.history .c-profit { width: 294px; }
.history th, .history td { height: 30px; text-align: right; padding-right: 4px; border-bottom: 1px solid #c0c0c0; border-right: 1px solid #c4c4c4; line-height: 24px; }
.history td { font-size: 19px; }
.history th { border-right-color: #e5e5e5; }
.history th:last-child, .history td:last-child { border-right: 0; padding-right: 3px; }
.history th:first-child, .history td:first-child { text-align: left; padding-left: 4px; }
.history th:first-child { padding-left: 6px; }
.history td svg { display: inline-block; width: 22px; height: 24px; margin-right: 5px; vertical-align: -6px; }
.history tbody tr:nth-child(even) { background: #ebebeb; }
.history td.hit { background: #60f060; border-bottom-color: #fff; }
.history tfoot td { background: #c8c8c8; border: 0; font-weight: bold; }
.sort { font-size: 12px; color: #808080; margin-left: 6px; }
.terminal-tabs { margin-top: 25px; height: 36px; display: flex; background: #f0f0f0; border-top: 1px solid #000; border-bottom: 1px solid #a0a0a0; color: #6d6d6d; padding-left: 1px; }
.terminal-tabs button { position: relative; height: 28px; line-height: 28px; padding: 0 15px; white-space: nowrap; }
.terminal-tabs button::after { content: ""; position: absolute; right: 0; top: 4px; bottom: 1px; border-right: 1px solid #808080; }
.terminal-tabs .before::after, .terminal-tabs .active::after { display: none; }
.terminal-tabs .active { margin-top: -1px; height: 30px; background: #fff; color: #000; border: 1px solid #000; border-top: 0; padding: 0 14px; }
.terminal-tabs b { color: #ff1818; font-size: 16px; margin-left: 3px; position: relative; top: 4px; }

.status { height: 28px; flex: none; display: flex; align-items: center; white-space: nowrap; padding-top: 6px; }
.status p { margin: 0 auto 0 -9px; }
.status span { height: 26px; padding-left: 5px; border-left: 1px solid #b0b0b0; display: flex; gap: 5px; }
.s-profile { width: 188px; }
.s-date { width: 174px; }
.s-ohl { width: 117px; }
.s-low { width: 112px; }
.s-vol { width: 109px; }
.s-net { width: 195px; }
.status svg { width: 40px; height: 24px; }

.speed { position: absolute; right: 171px; top: 981px; width: 188px; height: 90px; color: #3a3a50; font-family: "Open Sans", sans-serif; }
.rates { position: absolute; left: 42px; right: 0; top: 29px; height: 61px; border-radius: 0 31px 31px 0; background: #e6e6e6; padding: 5px 19px 5px 56px; }
.rates p { display: flex; align-items: center; justify-content: flex-end; gap: 2px; font-size: 15px; line-height: 25px; }
.rates p b { font-weight: 600; }
.rates svg { width: 10px; height: 14px; margin-right: auto; }
.gauge { position: absolute; left: 0; top: 0; width: 90px; height: 90px; border-radius: 50%; box-shadow: 0 0 14px #ff3010; }
.gauge strong { position: absolute; left: 15px; top: 21px; font-size: 40px; line-height: 46px; font-weight: 600; white-space: nowrap; }
.gauge small { font-size: 14px; }
.assistant { position: absolute; right: 0; top: 1375px; width: 10px; height: 94px; }
.watermark { position: absolute; inset: 0; width: 100%; height: 100%; pointer-events: none; opacity: .1; }
.wm-text { font: italic bold 58px "Liberation Sans", sans-serif; fill: #c81e28; stroke: #c81e28; stroke-width: 4px; }
```

FILE: chart.js
```js
// High/low envelope of the price series: runs of [x, high, low] triples,
// each run with its own origin and scale in plot pixels.
const runs = [
  { x: -10, y: 1003, kx: 1.568, ky: 3, p: [
    18,405,528, 22,420,530, 27,315,430, 32,297,340, 37,330,420, 42,400,445, 47,440,510, 52,490,550, 58,510,580, 65,530,600, 72,560,645, 77,540,605, 84,500,600, 90,515,595, 93,360,540, 98,345,430, 103,321,365, 109,322,350, 115,345,400, 120,342,400, 127,310,360, 135,295,355, 142,270,340, 148,300,330, 155,290,330, 162,276,330, 168,310,350, 175,345,362, 183,320,360, 190,320,365, 196,370,405, 203,368,405, 208,400,480, 214,430,470, 220,440,497, 226,400,465, 229,318,440, 234,380,465, 241,400,476, 248,410,450, 256,400,440, 263,390,430, 270,405,440, 278,380,430, 282,352,460, 288,405,473, 293,288,430, 297,342,440, 302,385,480, 308,410,470, 314,440,510, 319,495,583, 328,548,590, 334,498,545, 342,500,530, 348,450,520, 354,500,545, 361,520,575, 367,530,660, 373,500,570, 379,590,650, 386,570,610, 396,580,600, 404,530,580, 412,530,570, 420,545,605, 426,555,635, 432,565,610, 437,610,665, 442,660,740, 446,690,772, 452,710,768, 458,735,772, 466,712,755, 474,705,735, 480,720,780, 483,750,806, 489,755,795, 497,710,790, 503,740,780, 510,720,762, 515,680,735, 519,645,720, 525,628,690, 533,628,675, 541,655,685, 550,637,690, 557,680,715, 564,670,750, 570,720,828, 576,730,780, 583,750,795, 587,640,740, 592,550,640, 597,490,575, 604,490,530, 612,520,555, 617,550,590, 622,500,550, 628,480,520, 634,430,490, 641,405,480, 647,395,490, 653,370,440, 658,340,410, 663,306,455, 668,345,415, 675,375,415, 683,380,405, 689,390,485, 696,432,465, 704,435,480, 711,440,500, 718,440,470, 724,400,490, 730,420,495, 736,382,430, 742,390,455, 750,395,440, 758,380,420, 764,345,390, 771,360,395, 778,345,400, 783,300,345, 789,285,320, 796,250,300, 802,262,310, 808,290,380, 813,245,310, 819,225,290, 823,155,225, 830,170,215, 836,175,232, 843,158,200, 850,165,200, 856,128,200, 862,170,220, 868,200,275, 874,190,245, 880,183,230, 886,200,255, 892,255,300, 899,270,300, 906,272,317, 911,232,280, 919,240,285, 927,215,290, 933,260,315, 939,300,350, 944,350,400, 948,420,500, 952,470,680, 958,590,670, 963,670,720, 970,680,720, 978,705,735, 987,735,770, 995,700,745, 1003,690,720, 1012,672,715, 1020,690,730, 1024,575,690, 1029,610,690, 1036,675,720, 1044,680,725, 1052,675,715, 1058,705,738, 1065,685,725, 1073,670,725, 1078,635,680, 1085,625,670, 1090,600,690, 1093,470,600, 1097,423,530, 1102,490,558, 1106,432,520, 1113,480,510, 1121,440,495, 1128,480,520, 1135,490,530, 1142,450,500, 1148,402,475, 1155,420,480, 1162,400,475, 1165,100,360] },
  { x: 720, y: 253, kx: 1.4255, ky: 1.96, p: [
    20,1536,1568, 22,1475,1560, 26,1500,1568, 30,1495,1560, 34,1490,1530, 38,1452,1490, 42,1247,1435, 46,1300,1410, 50,1370,1437, 55,1290,1360, 60,1345,1380, 64,1345,1430, 68,1380,1442, 71,1310,1390, 75,1270,1335, 79,1265,1360, 83,1170,1260, 88,1087,1200, 93,1120,1170, 98,1085,1130, 104,1075,1130, 110,1085,1110, 116,1090,1160, 122,1125,1180, 127,1160,1190, 131,1082,1150, 136,1085,1192, 141,1155,1192, 146,1130,1200, 149,1095,1240, 154,1115,1195, 160,1112,1180, 165,1110,1165, 171,1155,1180, 178,1160,1198, 184,1150,1185, 190,1165,1190, 196,1178,1215, 201,1190,1320, 205,1200,1310, 209,1040,1200, 213,940,1055, 217,942,1050, 221,960,1010, 225,880,985, 229,970,1120, 234,1020,1070, 239,1015,1040, 244,990,1085, 248,1085,1133, 254,1065,1110, 260,1020,1095, 266,1015,1080, 272,1000,1050, 277,950,1010, 281,911,1000, 285,940,1040, 289,1020,1085, 295,1018,1065, 302,1020,1040, 308,1005,1045, 313,1003,1045, 317,950,1000, 323,925,965, 328,905,960, 334,920,965, 339,905,950, 343,880,960, 345,780,900, 349,650,800, 352,645,750, 357,660,720, 360,555,650, 363,447,570, 367,445,560, 370,423,560, 374,520,580, 379,560,618, 384,550,580, 389,440,560, 393,400,460, 396,261,440, 399,300,450, 402,420,520, 405,445,570, 410,458,580, 416,530,638, 421,510,600, 428,478,545, 434,510,540, 440,500,560, 445,475,540, 450,470,520, 456,485,540, 460,500,600, 464,590,662, 470,602,650, 475,620,680, 479,700,780, 483,740,830, 489,800,880, 493,840,896, 499,850,870, 505,825,850, 510,805,840, 516,850,880, 522,840,870, 527,830,908, 533,810,850, 540,820,885, 546,760,850, 551,760,810, 556,720,810, 558,525,800, 562,550,720, 566,600,650, 573,590,640, 580,540,600, 586,530,560, 591,485,550, 596,520,575, 602,515,560, 606,515,630, 611,470,560, 616,440,520, 620,360,430, 624,316,420, 628,350,440, 633,395,432, 640,385,430, 647,400,430, 654,405,460, 660,410,505, 665,360,420, 669,350,420, 673,320,410, 677,340,460, 682,400,460, 687,470,550, 692,515,555, 698,520,605, 704,540,575, 709,525,580, 715,550,580, 720,575,635, 726,590,640, 730,670,760, 735,710,790, 740,720,822, 745,695,770, 749,690,750, 755,715,760, 761,705,730, 768,690,720, 773,652,690, 779,675,710, 785,690,745, 790,710,770, 795,740,780, 800,660,725, 805,630,700, 810,600,690, 817,585,620, 822,555,590, 829,565,600, 836,595,625, 843,610,640, 850,630,680, 855,650,700, 861,612,655, 867,610,660, 874,585,670, 879,620,680, 885,608,650, 892,640,675, 898,655,690, 904,680,726, 910,670,710, 916,620,680, 921,588,640, 928,605,630, 935,557,630, 940,600,655, 944,540,600, 947,478,560, 952,485,530, 958,500,525, 965,500,535, 971,485,515, 978,500,530, 983,472,540, 988,520,573, 993,505,550, 1000,451,540, 1006,500,560, 1012,520,600, 1017,580,628, 1023,598,640, 1028,650,710, 1033,650,712, 1038,700,755, 1042,750,775, 1048,730,765, 1052,660,740, 1057,620,670, 1062,540,610, 1068,515,580, 1073,422,530, 1079,440,500, 1085,465,498, 1092,468,498, 1098,470,530, 1104,505,535, 1110,508,535, 1115,490,540, 1120,478,515, 1127,485,525, 1132,460,500, 1135,400,480, 1138,130,410, 1142,132,200, 1146,165,195, 1152,155,170, 1159,150,178, 1166,130,175, 1173,138,160, 1180,110,155, 1187,125,160, 1193,130,162, 1198,72,165, 1202,75,260, 1206,145,215, 1212,150,180, 1219,160,175, 1225,168,210, 1230,200,245, 1235,235,278, 1241,205,255, 1247,190,240, 1252,170,220, 1258,168,200, 1262,170,230, 1266,240,338, 1271,220,280, 1277,240,275, 1284,260,295, 1288,285,378, 1294,320,365, 1300,370,440, 1306,395,430, 1313,365,410, 1319,335,380, 1325,318,370, 1329,370,460, 1333,410,502, 1338,415,455, 1344,420,455, 1351,410,430, 1358,385,425, 1363,395,440, 1367,360,400, 1373,335,365, 1379,310,360, 1382,280,330, 1388,310,340, 1396,320,383, 1402,290,350, 1409,285,310, 1416,300,320, 1424,290,315, 1427,220,310, 1432,180,230, 1438,165,210, 1444,200,240, 1451,245,280, 1457,255,295, 1459,105,290, 1462,140,335, 1466,240,310, 1471,260,300, 1476,200,260, 1483,205,230, 1490,178,210, 1497,185,215, 1504,185,215, 1508,145,190, 1512,97,140, 1518,100,130, 1523,80,130] },
  { x: 1720, y: 33, kx: 2.063, ky: 2.8, p: [
    142,550,790, 147,535,625, 152,512,700, 156,590,690, 160,610,660, 166,570,650, 172,600,660, 180,610,625, 187,615,640, 193,545,610, 197,528,600, 204,540,590, 210,570,625, 215,568,620, 221,620,722, 227,630,690, 231,595,670, 235,640,715, 238,618,900, 242,760,870, 246,820,1135, 251,1090,1190, 255,1110,1202, 260,1040,1130, 266,1010,1070, 272,1040,1130, 278,1050,1110, 287,1045,1165, 293,1030,1065, 300,1032,1060, 305,945,1060, 312,928,985, 318,955,1010, 325,965,1030, 332,980,1050, 336,1080,1210, 341,1145,1340, 346,1190,1290, 351,1200,1270, 356,1145,1220, 362,1150,1175, 370,1165,1185, 378,1155,1190, 384,1100,1160, 391,1085,1140, 399,1090,1150, 407,1060,1130, 413,1045,1120, 420,1045,1100, 428,1035,1105, 432,1085,1217, 436,980,1120, 441,963,1030, 447,1005,1055, 455,1035,1070, 463,1035,1060, 471,1020,1055, 478,1008,1075, 485,1040,1085, 493,1055,1110, 497,1090,1265, 502,1150,1250, 507,1210,1390, 511,1340,1440, 515,1400,1465, 520,1430,1487, 523,1350,1480, 527,1190,1360, 532,1155,1240, 537,1155,1230, 543,1150,1185, 550,1145,1180, 558,1160,1185, 566,1155,1190, 573,1123,1205, 580,1185,1225, 587,1165,1215, 593,1093,1180, 599,1110,1180, 606,1100,1200, 611,1040,1110, 617,968,1140, 622,1010,1080, 626,958,1100, 631,1040,1125, 636,1015,1070, 642,1010,1060, 650,1035,1085, 658,1040,1090, 666,1042,1100, 674,1060,1095, 682,1085,1150, 688,1130,1328, 694,1240,1320, 700,1225,1300, 705,1198,1280, 712,1220,1325, 716,1135,1445, 721,1260,1455, 727,1350,1430, 734,1335,1385, 741,1315,1375, 748,1300,1345, 755,1285,1330, 761,1300,1360, 768,1325,1370, 774,1330,1370, 780,1350,1395, 787,1310,1380, 795,1270,1320, 802,1285,1320, 808,1290,1345, 812,1290,1428, 817,1260,1390, 823,1260,1300, 829,1220,1265, 836,1230,1260, 843,1210,1255, 849,1170,1220, 853,1095,1180, 859,1120,1180, 866,1160,1210, 873,1160,1220, 880,1140,1240, 886,1210,1270, 893,1240,1320, 898,1310,1390, 903,1175,1400, 908,1185,1310, 914,1220,1290, 920,1180,1240, 927,1062,1180, 932,1110,1170, 940,1115,1165, 948,1080,1150, 955,1110,1165, 961,1140,1190, 968,1130,1175, 976,1120,1175, 984,1105,1150, 992,1090,1215, 998,1100,1175, 1002,995,1140, 1007,1080,1160, 1012,1150,1260, 1018,1250,1312, 1024,1210,1290, 1031,1220,1270, 1038,1215,1240, 1046,1180,1240, 1052,1110,1180, 1058,1098,1140, 1066,1075,1140, 1073,1067,1140, 1080,1100,1155, 1087,1090,1155, 1092,1070,1330, 1097,1250,1425, 1103,1270,1350, 1109,1290,1340, 1114,1215,1300, 1121,1230,1270, 1129,1250,1275, 1137,1250,1290, 1143,1210,1290, 1150,1220,1260, 1157,1240,1310, 1164,1270,1320, 1171,1300,1357, 1179,1295,1330, 1187,1250,1400, 1192,1240,1325, 1196,1185,1330, 1201,1168,1250, 1208,1200,1245, 1216,1230,1265, 1224,1208,1250, 1231,1240,1310, 1238,1290,1340, 1245,1300,1345, 1249,1275,1330, 1255,1320,1360, 1262,1330,1370, 1268,1300,1390, 1273,1240,1310, 1278,1230,1290, 1283,1040,1260, 1287,1035,1160, 1291,1150,1320, 1296,1290,1350, 1303,1300,1355, 1311,1320,1360, 1319,1310,1340, 1327,1300,1335, 1335,1300,1340, 1343,1310,1340, 1351,1285,1330, 1358,1285,1350, 1362,1300,1372, 1367,1270,1330, 1373,1230,1285, 1381,1240,1300, 1385,950,1270, 1389,920,1030, 1394,870,950, 1400,900,975, 1407,885,930, 1414,900,920, 1422,900,935, 1430,880,910, 1438,870,910, 1445,880,940, 1450,880,958, 1457,900,935, 1464,895,930, 1471,900,1018, 1476,860,960, 1481,840,960, 1485,780,860, 1491,790,840, 1497,670,905, 1501,670,870, 1505,615,760, 1509,83,594, 1513,415,495, 1517,412,480, 1522,440,580, 1527,545,645, 1533,555,620, 1538,555,610, 1544,600,665, 1548,650,738, 1553,650,725] },
  { x: 2460, y: 33, kx: 2.013, ky: 2.306, p: [
    28,525,575, 32,490,540, 35,460,520, 39,480,575, 43,455,590, 47,313,483, 51,350,480, 55,370,440, 59,400,468, 65,400,460, 71,400,430, 78,405,430, 85,400,430, 88,380,425, 93,390,458, 99,398,440, 105,415,465, 110,430,465, 113,480,520, 119,505,540, 125,515,550, 131,520,580, 133,530,835, 137,790,905, 141,805,918, 145,755,835, 149,722,785, 155,740,780, 162,722,765, 170,730,770, 178,725,765, 184,695,750, 189,665,715, 195,662,710, 202,680,715, 210,670,700, 217,655,695, 223,640,700, 228,640,735, 233,650,690, 237,615,685, 243,630,670, 249,670,705, 256,685,712, 263,690,710, 270,690,718, 276,665,700, 283,655,690, 289,625,665, 295,650,695, 301,660,700, 307,625,670, 313,583,640, 320,605,685, 326,605,665, 332,610,670, 337,535,605, 344,550,570, 351,555,575, 358,538,560, 363,528,565, 368,570,605, 374,590,610, 381,590,635, 387,585,630, 394,600,650, 401,590,630, 407,590,630, 410,430,665, 414,445,620, 418,530,640, 422,610,700, 427,610,665, 433,570,615, 440,590,622, 447,595,615, 453,560,600, 458,546,590, 465,570,600, 472,585,612, 478,580,640, 483,625,695, 488,650,697, 493,620,660, 498,520,625, 502,498,628, 505,530,800, 510,690,790, 514,692,780, 519,730,785, 526,745,780, 534,755,778, 540,750,765, 546,737,770, 551,760,810, 557,785,830, 563,790,800, 569,800,855, 575,785,830, 580,830,870, 584,840,905, 590,840,888, 595,755,880, 599,685,800, 604,700,810, 609,800,830, 614,750,800, 620,755,790, 626,790,810, 632,800,840, 638,790,830, 643,722,790, 650,750,785, 656,740,790, 663,730,780, 669,705,750, 675,735,765, 681,740,790, 687,730,800, 691,690,770, 697,700,780, 703,705,745, 708,697,740, 713,735,770, 720,745,765, 728,750,778, 736,728,765, 744,730,755, 750,740,780, 754,760,840, 757,790,887, 761,810,850, 768,808,830, 776,815,860, 780,763,903, 785,790,850, 790,860,920, 795,930,1000, 800,1010,1060, 805,1000,1045, 811,1000,1030, 818,1010,1035, 825,982,1015, 832,983,1010, 839,990,1010, 846,1000,1045, 854,1010,1050, 861,1030,1080, 867,1025,1070, 873,1030,1095, 877,1040,1150, 882,1070,1165, 888,1070,1115, 895,1068,1105, 902,1070,1105, 910,1078,1105, 918,1070,1095, 925,1055,1095, 931,1080,1120, 938,1100,1140, 944,1110,1160, 949,1140,1195, 956,1125,1165, 962,1145,1180, 966,1175,1260, 970,1230,1350, 974,1290,1370, 978,1320,1396, 984,1330,1378, 990,1328,1365, 998,1330,1350, 1006,1320,1345, 1013,1310,1378, 1017,1280,1350, 1024,1275,1300, 1030,1275,1310, 1034,1228,1300, 1040,1240,1275, 1046,1230,1275, 1053,1245,1290, 1060,1270,1320, 1066,1290,1345, 1070,1070,1335, 1074,1120,1190, 1078,1078,1140, 1084,1110,1160, 1090,1130,1170, 1097,1098,1135, 1104,1095,1130, 1111,1110,1145, 1118,1120,1160, 1125,1140,1205, 1132,1110,1175, 1138,1085,1140, 1143,1100,1140, 1147,1130,1218, 1153,1140,1200, 1158,1125,1225, 1164,1160,1200, 1170,1122,1175, 1176,1160,1195, 1183,1185,1205, 1190,1195,1220, 1196,1200,1270, 1200,1250,1310, 1207,1270,1315, 1213,1270,1300, 1220,1270,1340, 1227,1305,1373, 1234,1310,1370, 1240,1290,1340, 1246,1190,1330, 1250,1175,1250, 1255,1220,1275, 1260,1165,1240, 1267,1140,1175, 1274,1155,1175, 1281,1140,1170, 1288,1145,1170, 1295,1160,1190, 1301,1130,1170, 1307,1107,1150, 1313,1150,1208, 1320,1140,1180, 1327,1140,1175, 1332,1095,1150, 1336,1060,1125, 1341,1160,1220, 1346,1195,1260, 1352,1265,1350, 1359,1262,1325, 1366,1310,1345, 1373,1295,1340, 1380,1310,1345, 1387,1320,1365, 1394,1325,1355, 1402,1320,1366, 1408,1290,1340, 1414,1265,1310, 1420,1285,1310, 1427,1283,1523] }
];

const points = [];
for (const r of runs) {
  for (let i = 0; i < r.p.length; i += 3) {
    points.push([r.x + r.p[i] / r.kx, r.y + r.p[i + 1] / r.ky, r.y + r.p[i + 2] / r.ky]);
  }
}

// Fixed seed, so that the bars come out the same on every load.
let seed = 7;
const rand = () => (seed = (seed * 16807) % 2147483647) / 2147483647;

// One hourly bar every two pixels; bars that hold a turning point keep its full range.
let d = "";
let k = 0;
for (let x = 1; x <= 3169; x += 2) {
  while (k < points.length - 2 && points[k + 1][0] < x) k++;
  const a = points[k], b = points[k + 1];
  const near = Math.abs(a[0] - x) <= 1 ? a : Math.abs(b[0] - x) <= 1 ? b : null;
  let hi, lo;
  if (near) {
    hi = near[1];
    lo = near[2];
  } else {
    const t = Math.min(1, Math.max(0, (x - a[0]) / (b[0] - a[0])));
    const h = a[1] + (b[1] - a[1]) * t, l = a[2] + (b[2] - a[2]) * t;
    hi = h + rand() * (l - h) * 0.35;
    lo = l - rand() * (l - h) * 0.35;
  }
  d += `M${x + 0.5} ${Math.round(hi)}V${Math.round(lo)}`;
}
document.getElementById("bars").setAttribute("d", d);
```
